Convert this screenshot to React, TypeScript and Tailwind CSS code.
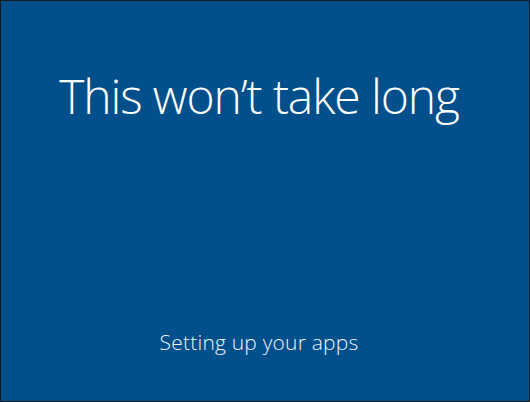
export default function App() {
  return (
    <div className="w-[530px] h-[402px] bg-[#1b1b1b] p-px">
      <div
        className="flex h-full w-full flex-col items-center bg-[#014f8b] pr-[12px] text-white"
        style={{ fontFamily: '"Open Sans", "Noto Sans", sans-serif' }}
      >
        <h1 className="mt-[63px] text-[48px] font-light leading-[64px] tracking-[-1.1px]">
          This won’t take long
        </h1>
        <div className="flex-1" />
        <p className="mb-[45px] text-[21px] font-light leading-[28px] tracking-[0.2px] text-[#eef3f8]">
          Setting up your apps
        </p>
      </div>
    </div>
  );
}
